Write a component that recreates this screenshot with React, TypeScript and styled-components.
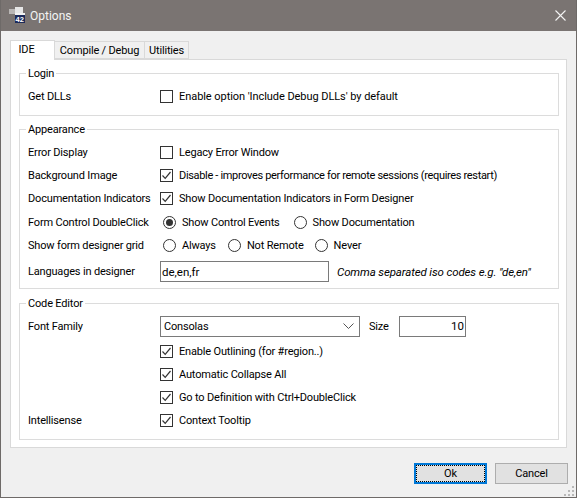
import React from "react";
import styled, { createGlobalStyle } from "styled-components";

const Global = createGlobalStyle`
  html, body { margin: 0; padding: 0; background: #f0f0f0; }
  body { font-family: Roboto, "Liberation Sans", sans-serif; font-size: 11px; letter-spacing: -0.17px; color: #000; }
`;

const Win = styled.div`
  width: 577px; height: 498px; box-sizing: border-box; display: flex; flex-direction: column;
  border: 1px solid #6e6a68; border-top: 0; background: #f0f0f0; overflow: hidden; position: relative;
`;
const TitleBar = styled.div`
  height: 31px; flex: none; background: #7a7472; display: flex; align-items: center; padding: 0 10px 0 8px; color: #fff;
`;
const TitleText = styled.div`
  font-size: 12px; letter-spacing: 0; margin-left: 4px; flex: 1; color: #f4f4f4;
`;
const Content = styled.div`
  flex: 1; padding: 10px 9px 0 9px; display: flex; flex-direction: column;
`;
const TabBar = styled.div`
  display: flex; height: 18px; align-items: flex-end; position: relative; z-index: 1;
`;
const Tab = styled.div<{ $active?: boolean; $w: number }>`
  box-sizing: border-box;
  width: ${(p) => p.$w}px;
  border: 1px solid #d9d9d9;
  border-bottom: ${(p) => (p.$active ? "0" : "1px solid #d9d9d9")};
  border-left: ${(p) => (p.$active ? "1px solid #d9d9d9" : "0")};
  background: ${(p) => (p.$active ? "#fff" : "#f0f0f0")};
  height: ${(p) => (p.$active ? "20px" : "18px")};
  margin-bottom: ${(p) => (p.$active ? "-1px" : "0")};
  padding: ${(p) => (p.$active ? "1px 12px 0 0" : "1px 0 0 0")};
  text-align: center;
  line-height: 15px;
  white-space: nowrap;
`;
const Panel = styled.div`
  box-sizing: border-box; height: 389px; border: 1px solid #d9d9d9; background: #fff;
  padding: 6px 7px 0 8px; display: flex; flex-direction: column; gap: 6px;
`;
const Group = styled.fieldset<{ $h: number; $mt?: number }>`
  box-sizing: border-box; height: ${(p) => p.$h}px; margin: ${(p) => p.$mt ?? 0}px 0 0; padding: 4px 8px 0; border: 1px solid #dcdcdc; min-width: 0;
`;
const Legend = styled.legend`
  padding: 0 2px; margin-left: -2px; line-height: 15px; height: 15px;
`;
const Row = styled.div<{ $h?: number; $mt?: number }>`
  display: flex; align-items: center; height: ${(p) => p.$h ?? 23}px; margin-top: ${(p) => p.$mt ?? 0}px; white-space: nowrap;
`;
const RowLabel = styled.div`
  width: 132px; flex: none;
`;
const Choice = styled.label<{ $ml?: number; $ls?: number }>`
  display: inline-flex; align-items: center; margin-left: ${(p) => p.$ml ?? 0}px;
  letter-spacing: ${(p) => p.$ls ?? -0.17}px;
`;
const Box = styled.span`
  box-sizing: border-box; width: 13px; height: 13px; border: 1px solid #333; background: #fff;
  display: inline-flex; align-items: center; justify-content: center; margin-right: 6px; flex: none;
`;
const Radio = styled.span<{ $on?: boolean }>`
  box-sizing: border-box; width: 13px; height: 13px; border: 1px solid #333; border-radius: 50%; background: #fff;
  display: inline-flex; align-items: center; justify-content: center; margin-right: 6px; flex: none;
  &::after { content: ""; width: 7px; height: 7px; border-radius: 50%; background: ${(p) => (p.$on ? "#333" : "transparent")}; }
`;
const RadioRow = styled.div`
  display: flex; align-items: center; padding-left: 3px;
`;
const TextField = styled.div<{ $w: number; $right?: boolean }>`
  box-sizing: border-box; width: ${(p) => p.$w}px; height: 21px; border: 1px solid #7a7a7a; background: #fff;
  display: flex; align-items: center; padding: 0 1px; font-size: 11.5px; letter-spacing: 0;
  justify-content: ${(p) => (p.$right ? "flex-end" : "flex-start")};
`;
const Hint = styled.div`
  font-style: italic; margin-left: 8px; font-size: 11.5px; letter-spacing: -0.13px;
`;
const Select = styled.div`
  box-sizing: border-box; width: 200px; height: 21px; border: 1px solid #7a7a7a; background: #fff;
  display: flex; align-items: center; justify-content: space-between; padding: 0 5px 0 3px;
`;
const SizeLabel = styled.div`
  width: 30px; margin: 0 0 0 9px;
`;
const FontRow = styled(Row)`
  height: 26px; margin-top: -2px; margin-bottom: 1px;
`;
const Footer = styled.div`
  flex: 1; display: flex; justify-content: flex-end; gap: 8px; padding-top: 15px; margin-right: -1px; position: relative;
`;
const Button = styled.div<{ $def?: boolean }>`
  box-sizing: border-box; width: 73px; height: 21px; display: flex; align-items: center; justify-content: center;
  background: #e1e1e1; border: ${(p) => (p.$def ? "2px solid #0078d7" : "1px solid #adadad")};
  position: relative;
  ${(p) => p.$def ? `&::after { content: ""; position: absolute; inset: 0; border: 1px dotted #000; }` : ""}
`;
const Grip = styled.svg`
  position: absolute; right: -7px; bottom: 0;
`;

const Check = () => (
  <svg width="11" height="11" viewBox="0 0 11 11"><path d="M1.5 5.5 L4.2 8.3 L9.5 2" fill="none" stroke="#333" strokeWidth="1.2" /></svg>
);
const CB = ({ on, ls, children }: { on?: boolean; ls?: number; children: React.ReactNode }) => (
  <Choice $ls={ls}><Box>{on && <Check />}</Box>{children}</Choice>
);
const RB = ({ on, ml, children }: { on?: boolean; ml?: number; children: React.ReactNode }) => (
  <Choice $ml={ml}><Radio $on={on} />{children}</Choice>
);
const AppIcon = () => (
  <svg width="17" height="17" viewBox="0 0 17 17">
    <rect x="0" y="2" width="7" height="5" fill="#b9b6b5" />
    <rect x="6" y="0" width="8" height="6" fill="#e6e6e6" />
    <rect x="6" y="8" width="10" height="8" fill="#1c2a5a" />
    <rect x="6" y="6" width="10" height="2" fill="#f2f2f2" />
    <text x="6.5" y="15.3" fontSize="7.5" fontWeight="700" fill="#fff" letterSpacing="0" fontFamily="Liberation Sans, sans-serif">42</text>
  </svg>
);

export default function App() {
  return (
    <Win>
      <Global />
      <TitleBar>
        <AppIcon />
        <TitleText>Options</TitleText>
        <svg width="11" height="11" viewBox="0 0 11 11"><path d="M.5.5 10.5 10.5M10.5.5.5 10.5" stroke="#f4f4f4" strokeWidth="1.1" /></svg>
      </TitleBar>
      <Content>
        <TabBar>
          <Tab $active $w={45}>IDE</Tab>
          <Tab $w={90}>Compile / Debug</Tab>
          <Tab $w={44}>Utilities</Tab>
        </TabBar>
        <Panel>
          <Group $h={50}>
            <Legend>Login</Legend>
            <Row><RowLabel>Get DLLs</RowLabel><CB ls={-0.06}>Enable option 'Include Debug DLLs' by default</CB></Row>
          </Group>
          <Group $h={167}>
            <Legend>Appearance</Legend>
            <Row><RowLabel>Error Display</RowLabel><CB>Legacy Error Window</CB></Row>
            <Row><RowLabel>Background Image</RowLabel><CB on ls={-0.33}>Disable - improves performance for remote sessions (requires restart)</CB></Row>
            <Row><RowLabel>Documentation Indicators</RowLabel><CB on>Show Documentation Indicators in Form Designer</CB></Row>
            <Row $mt={1}><RowLabel>Form Control DoubleClick</RowLabel><RadioRow><RB on>Show Control Events</RB><RB ml={14}>Show Documentation</RB></RadioRow></Row>
            <Row><RowLabel>Show form designer grid</RowLabel><RadioRow><RB>Always</RB><RB ml={12}>Not Remote</RB><RB ml={11}>Never</RB></RadioRow></Row>
            <Row $h={29}><RowLabel>Languages in designer</RowLabel><TextField $w={169}>de,en,fr</TextField><Hint>Comma separated iso codes e.g. "de,en"</Hint></Row>
          </Group>
          <Group $h={144} $mt={1}>
            <Legend>Code Editor</Legend>
            <FontRow><RowLabel>Font Family</RowLabel><Select>Consolas
              <svg width="11" height="6" viewBox="0 0 11 6"><path d="M.5.5 5.5 5.5 10.5.5" fill="none" stroke="#555" /></svg>
            </Select><SizeLabel>Size</SizeLabel><TextField $w={67} $right>10</TextField></FontRow>
            <Row><RowLabel /><CB on>Enable Outlining (for #region..)</CB></Row>
            <Row><RowLabel /><CB on>Automatic Collapse All</CB></Row>
            <Row><RowLabel /><CB on>Go to Definition with Ctrl+DoubleClick</CB></Row>
            <Row><RowLabel>Intellisense</RowLabel><CB on>Context Tooltip</CB></Row>
          </Group>
        </Panel>
        <Footer>
          <Button $def>Ok</Button>
          <Button>Cancel</Button>
          <Grip width="11" height="11" viewBox="0 0 11 11">
            <g fill="#b8b8b8"><rect x="8" y="0" width="2" height="2"/><rect x="4" y="4" width="2" height="2"/><rect x="8" y="4" width="2" height="2"/><rect x="0" y="8" width="2" height="2"/><rect x="4" y="8" width="2" height="2"/><rect x="8" y="8" width="2" height="2"/></g>
          </Grip>
        </Footer>
      </Content>
    </Win>
  );
}
